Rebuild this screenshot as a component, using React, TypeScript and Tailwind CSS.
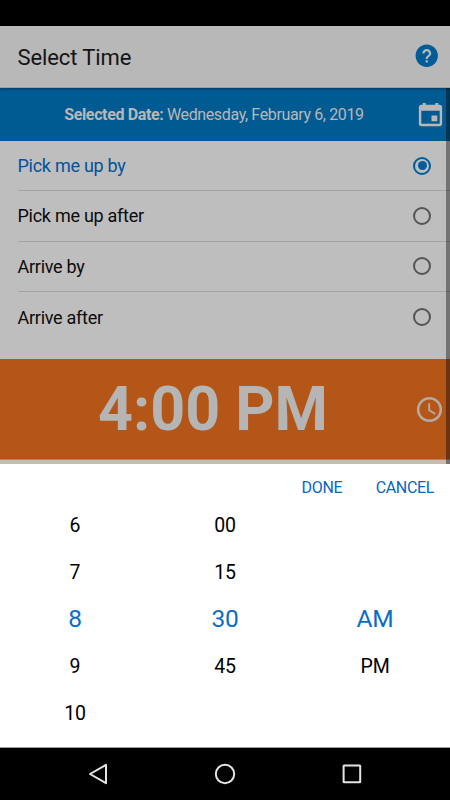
import { useState } from "react";
import { IoMdCalendar, IoMdHelpCircle, IoMdTime } from "react-icons/io";

const OPTIONS = ["Pick me up by", "Pick me up after", "Arrive by", "Arrive after"];

interface ColumnProps {
  items: string[];
  selected: number;
}

function PickerColumn({ items, selected }: ColumnProps) {
  return (
    <div className="flex flex-1 flex-col items-center">
      {items.map((item, i) => (
        <div
          key={i}
          className={`flex h-[47px] items-center justify-center ${
            i === selected
              ? "text-[24.5px] tracking-[-0.3px] text-[#0a6ec7]"
              : "text-[19.5px] tracking-[-0.2px] text-black"
          }`}
        >
          {item}
        </div>
      ))}
    </div>
  );
}

function Radio({ checked }: { checked: boolean }) {
  return (
    <span
      className={`flex h-[18px] w-[18px] items-center justify-center rounded-full border-2 ${
        checked ? "border-[#005c9c]" : "border-[#545454]"
      }`}
    >
      {checked && <span className="h-[9px] w-[9px] rounded-full bg-[#005c9c]" />}
    </span>
  );
}

export default function App() {
  const [choice, setChoice] = useState(0);

  return (
    <div className="relative flex h-[800px] w-[450px] flex-col overflow-hidden bg-black font-['Roboto',sans-serif]">
      <div className="h-[26px] shrink-0" />

      <header className="flex h-[62px] shrink-0 items-center justify-between border-b border-[#9a9fa3] bg-[#b8b8b8] pr-[10px] pl-[17.5px]">
        <h1 className="pt-0.5 text-[22px] tracking-[-0.1px] text-[#141414]">Select Time</h1>
        <IoMdHelpCircle className="mb-[2px] h-[27.5px] w-[27.5px] text-[#005c96]" />
      </header>

      <div className="flex h-[53px] shrink-0 items-center bg-[#005b93] pr-[4px] text-[#b8b8b8] shadow-[inset_0_3px_3px_-2px_rgba(0,0,0,0.4)]">
        <p className="flex-1 pl-[13px] text-center text-base tracking-[-0.37px]">
          <b>Selected Date:</b> Wednesday, February 6, 2019
        </p>
        <IoMdCalendar className="mb-px h-[31px] w-[31px]" />
      </div>

      <div className="h-[218px] shrink-0 bg-[#bebebe] pl-[17.5px]">
        {OPTIONS.map((label, i) => (
          <button
            key={label}
            onClick={() => setChoice(i)}
            className={`flex h-[50.3px] w-full items-center justify-between pr-[19px] text-left text-[18px] tracking-[-0.27px] ${
              i < OPTIONS.length - 1 ? "border-b border-[#a3a3a3]" : ""
            } ${i === choice ? "text-[#00549b]" : "text-[#0c0c0c]"}`}
          >
            {label}
            <Radio checked={i === choice} />
          </button>
        ))}
      </div>

      <div className="flex h-[100px] shrink-0 items-center bg-[#b45618] pr-[5px] text-[#b5b5b5]">
        <p className="flex-1 pl-[12px] text-center text-[61px] leading-none font-bold">4:00 PM</p>
        <IoMdTime className="h-[31px] w-[31px]" />
      </div>
      <div className="h-[5px] shrink-0 border-t border-[#8f8f8f] bg-[#bebebe]" />

      <section className="flex h-[283px] shrink-0 flex-col bg-white">
        <div className="flex h-[38px] items-end justify-end gap-[33.5px] pr-4 pb-[2px] text-base leading-6 tracking-[-0.35px] text-[#0a66bf]">
          <button>DONE</button>
          <button>CANCEL</button>
        </div>
        <div className="flex">
          <PickerColumn items={["6", "7", "8", "9", "10"]} selected={2} />
          <PickerColumn items={["00", "15", "30", "45"]} selected={2} />
          <PickerColumn items={["", "", "AM", "PM"]} selected={2} />
        </div>
      </section>

      <nav className="flex flex-1 items-center justify-between border-t border-[#9c9c9c] pr-[88px] pl-[88px]">
        <svg width="20" height="22" viewBox="0 0 20 22" fill="none" stroke="#e4e4e4" strokeWidth="2">
          <path d="M2 11 18 1.8V20.2Z" strokeLinejoin="round" />
        </svg>
        <svg width="22" height="22" viewBox="0 0 22 22" fill="none" stroke="#e4e4e4" strokeWidth="2">
          <circle cx="11" cy="11" r="9.2" />
        </svg>
        <svg width="20" height="20" viewBox="0 0 20 20" fill="none" stroke="#e4e4e4" strokeWidth="2">
          <rect x="1.6" y="1.6" width="16.6" height="16.6" rx="0.5" />
        </svg>
      </nav>

      {/* scroll track over the page content */}
      <div className="absolute top-[88px] right-0 h-[376px] w-1 bg-black/40" />
    </div>
  );
}
